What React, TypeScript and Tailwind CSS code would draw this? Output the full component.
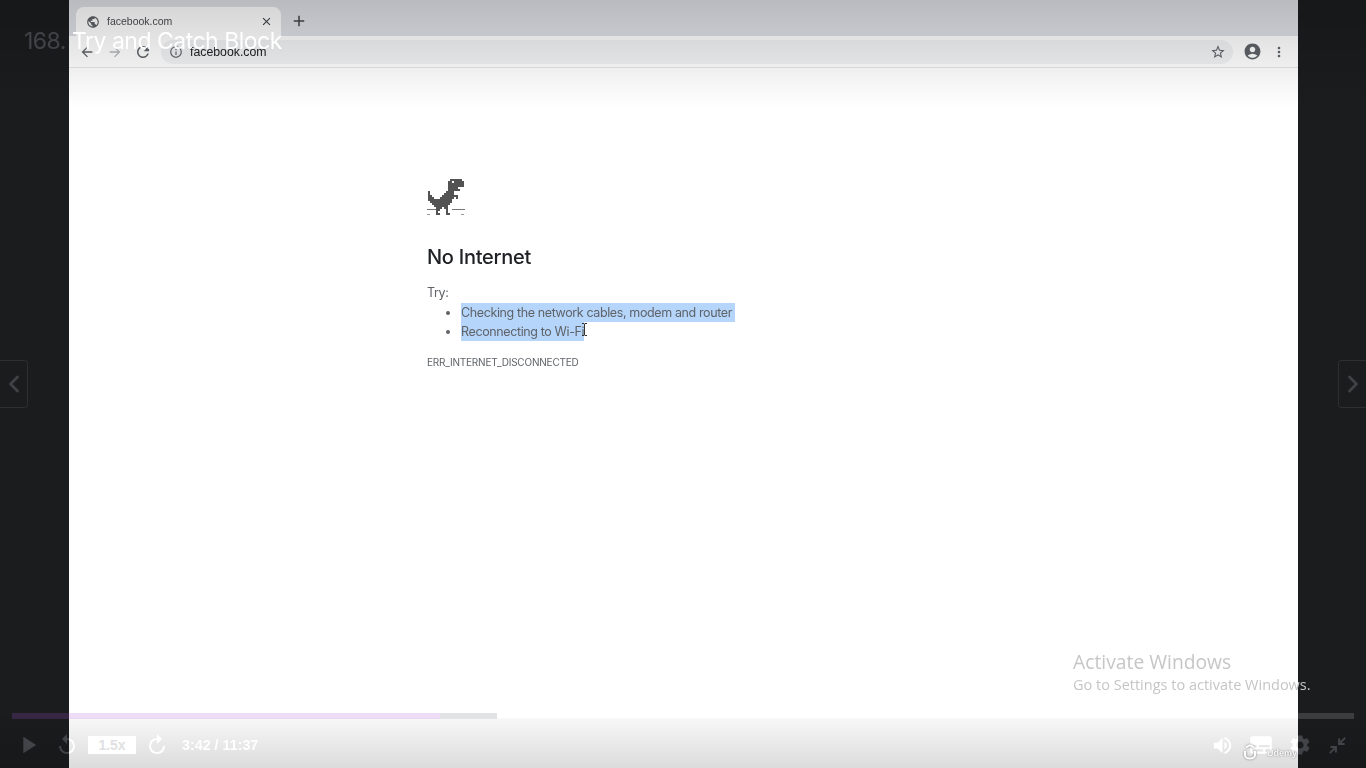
import { MdAccountCircle, MdAdd, MdArrowBack, MdArrowForward, MdClose, MdInfoOutline, MdMoreVert, MdPlayArrow, MdPublic, MdRefresh, MdReplay, MdSettings, MdStarBorder, MdSubtitles, MdVolumeUp } from 'react-icons/md';
import { ChevronLeft, ChevronRight, Minimize2 } from 'lucide-react';

// 2px cells, x marks a filled pixel of the dino
const DINO = [
  '...........xxxxxx.',
  '..........xx.xxxxx',
  '..........xxxxxxxx',
  '..........xxxxxxxx',
  '..........xxxxx...',
  '..........xxxxxx..',
  'x........xxxx.....',
  'x.......xxxxx.....',
  'xx.....xxxxxxxx...',
  'xxx...xxxxxxx.x...',
  'xxxxxxxxxxxx......',
  '.xxxxxxxxxxx......',
  '..xxxxxxxxx.......',
  '...xxxxxxx........',
  '....xxx.xx........',
  '....xx...x........',
  '....x....x........',
  '....xx...xx.......',
];

function Dino() {
  return (
    <svg width="40" height="38" viewBox="0 0 40 38" shapeRendering="crispEdges" className="block">
      {DINO.map((row, y) =>
        row.split('').map((c, x) =>
          c === 'x' ? <rect key={`${x}-${y}`} x={x * 2 + 1} y={y * 2 + 1} width="2" height="2" fill="#535353" /> : null
        )
      )}
      <rect x="0" y="31" width="9" height="1" fill="#777" />
      <rect x="25" y="31" width="13" height="1" fill="#777" />
      <rect x="0" y="36" width="3" height="1" fill="#999" />
      <rect x="34" y="36" width="3" height="1" fill="#999" />
    </svg>
  );
}

function TabStrip() {
  return (
    <div className="h-9 bg-[#dee1e6] flex items-end pl-[7px]">
      <div className="w-[205px] h-[29px] bg-white rounded-t-lg flex items-center pl-[10px] pr-2 text-[10.5px] text-[#4a4c50]">
        <MdPublic className="w-[14px] h-[14px] text-[#5f6368]" />
        <span className="ml-[7px] flex-1">facebook.com</span>
        <MdClose className="w-[13px] h-[13px] text-[#3c4043]" />
      </div>
      <MdAdd className="w-[18px] h-[18px] ml-[9px] mb-[6px] text-[#44474b]" />
    </div>
  );
}

function Toolbar() {
  return (
    <div className="h-[32px] bg-white border-b border-[#e6e6e6] flex items-center pl-[10px] pr-[10px]">
      <MdArrowBack className="w-[16px] h-[16px] text-[#5f6368]" />
      <MdArrowForward className="w-[16px] h-[16px] ml-[12px] text-[#b5b7ba]" />
      <MdRefresh className="w-[18px] h-[18px] ml-[11px] text-[#5f6368]" />
      <div className="ml-[9px] w-[1072px] h-6 rounded-full bg-[#f1f3f4] flex items-center pl-[8px] pr-[7px] text-[12.3px] text-[#202124]">
        <MdInfoOutline className="w-[14px] h-[14px] text-[#5f6368]" />
        <span className="ml-[7px] flex-1 pt-px">facebook.com</span>
        <MdStarBorder className="w-[16px] h-[16px] text-[#5f6368]" />
      </div>
      <MdAccountCircle className="w-[19px] h-[19px] ml-[10px] text-[#5f6368]" />
      <MdMoreVert className="w-[16px] h-[16px] ml-[9px] text-[#5f6368]" />
    </div>
  );
}

function ErrorPage() {
  return (
    <div className="pl-[358px] pt-[110px] font-['Inter','Liberation_Sans',sans-serif] text-[#5f6368] blur-[0.5px]">
      <Dino />
      <h1 className="mt-[28px] text-[20px] leading-[26px] font-medium tracking-[-0.27px] text-[#202124]">No Internet</h1>
      <p className="mt-[13px] text-[12.5px] leading-[20px] tracking-[-0.38px]">Try:</p>
      <ul className="pl-[34px] list-disc text-[12.5px] leading-[19px] tracking-[-0.38px]">
        <li>
          <span className="inline-block bg-[#b5d5fb] pr-[3px]">Checking the network cables, modem and router</span>
        </li>
        <li>
          <span className="inline-block bg-[#b5d5fb]">Reconnecting to Wi-Fi</span>
        </li>
      </ul>
      <p className="mt-[14px] text-[10px] leading-[14px] tracking-[-0.2px]">ERR_INTERNET_DISCONNECTED</p>
    </div>
  );
}

function TextCursor() {
  return (
    <svg width="7" height="13" viewBox="0 0 7 13" fill="none" stroke="#333" strokeWidth="1" className="absolute left-[581px] top-[323px]">
      <path d="M1 .5h2l.5.5.5-.5h2M3.5 1v11M1 12.5h2l.5-.5.5.5h2" />
    </svg>
  );
}

function PlayerControls() {
  const dodge = 'absolute mix-blend-color-dodge text-[#9e9e9e]';
  return (
    <>
      <div className="absolute left-0 right-0 bottom-0 h-[50px] bg-gradient-to-b from-black/3 to-black/14" />

      <div className="absolute left-[12px] top-[713px] w-[1342px] h-[6px] flex">
        <div className="w-[428px] bg-[rgba(177,85,221,0.2)]" />
        <div className="w-[57px] bg-[#e2e3e4]" />
        <div className="flex-1 bg-white/15" />
      </div>

      <MdPlayArrow className={`${dodge} left-[14px] top-[731px] w-7 h-7`} />
      <MdReplay className={`${dodge} left-[55px] top-[733px] w-6 h-6`} />
      <div className="absolute left-[88px] top-[736px] w-[48px] h-[18px] bg-white flex items-center justify-center text-[14px] font-bold text-[#dfe0e2] font-['Liberation_Sans',sans-serif]">1.5x</div>
      <MdReplay className={`${dodge} left-[145px] top-[733px] w-6 h-6 -scale-x-100`} />
      <span className={`${dodge} left-[182px] top-[736px] text-[14.3px] leading-[18px] font-bold font-['Liberation_Sans',sans-serif]`}>3:42 / 11:37</span>

      <MdVolumeUp className={`${dodge} left-[1211px] top-[734px] w-[23px] h-[23px]`} />
      <MdSubtitles className={`${dodge} left-[1248px] top-[732px] w-[26px] h-[26px]`} />
      <MdSettings className={`${dodge} left-[1288px] top-[733px] w-6 h-6`} />
      <Minimize2 className={`${dodge} left-[1328px] top-[736px] w-[19px] h-[19px]`} strokeWidth={2.5} />

      <div className="absolute left-[1243px] top-[743px] flex items-center text-[9px] leading-[16px] font-bold text-white/90 font-['Liberation_Sans',sans-serif] [text-shadow:0_0_2px_#777]">
        <svg width="14" height="16" viewBox="0 0 14 16" fill="none" stroke="#fff" strokeWidth="2" className="drop-shadow-[0_0_1px_#777]">
          <path d="M2 7v4a5 3.500 0 0 0 10 0V7M7 1 3 3.500M7 1l4 2.500" />
        </svg>
        <span className="ml-[10px] mt-[2px]">Udemy</span>
      </div>
    </>
  );
}

export default function App() {
  return (
    <div className="relative h-screen w-full overflow-hidden bg-[#1b1c1e] pl-[69px] pr-[68px] font-['Liberation_Sans',sans-serif]">
      <div className="h-full bg-white">
        <TabStrip />
        <Toolbar />
        <ErrorPage />
      </div>

      {/* video dims the top of the frame */}
      <div className="absolute left-0 right-0 top-0 h-[108px] bg-gradient-to-b from-black/17 to-transparent" />

      <span className="absolute left-[24px] top-[26px] text-[23px] leading-[30px] tracking-[-0.5px] mix-blend-color-dodge text-[#9e9e9e] font-['Inter',sans-serif]">168. Try and Catch Block</span>

      <TextCursor />

      <div className="absolute left-0 top-[360px] w-[28px] h-[48px] border border-l-0 border-[#2e2f31] rounded-r flex items-center justify-center text-[#404144]">
        <ChevronLeft className="w-7 h-7 shrink-0" strokeWidth={2.5} />
      </div>
      <div className="absolute right-0 top-[360px] w-[28px] h-[48px] border border-r-0 border-[#2e2f31] rounded-l flex items-center justify-center text-[#404144]">
        <ChevronRight className="w-7 h-7 shrink-0" strokeWidth={2.5} />
      </div>

      <div className="absolute left-[1073px] top-[649px] text-[#c6c6c6] font-['Open_Sans',sans-serif]">
        <div className="text-[19.3px] leading-[25px]">Activate Windows</div>
        <div className="text-[14.5px] leading-[21px]">Go to Settings to activate Windows.</div>
      </div>

      <PlayerControls />
    </div>
  );
}
